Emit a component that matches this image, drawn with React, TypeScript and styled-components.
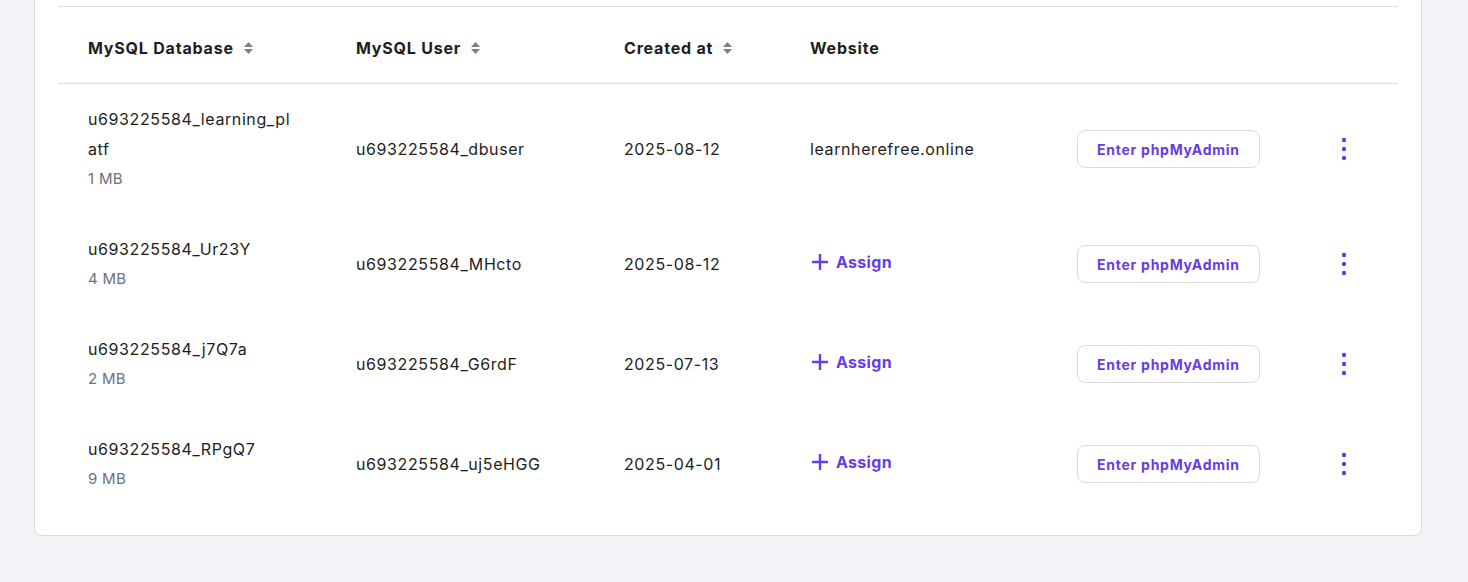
import React from "react";
import { createGlobalStyle, styled } from "styled-components";

type Db = {
  name: string;
  size: string;
  user: string;
  created: string;
  website?: string;
};

const rows: Db[] = [
  {
    name: "u693225584_learning_platf",
    size: "1 MB",
    user: "u693225584_dbuser",
    created: "2025-08-12",
    website: "learnherefree.online",
  },
  { name: "u693225584_Ur23Y", size: "4 MB", user: "u693225584_MHcto", created: "2025-08-12" },
  { name: "u693225584_j7Q7a", size: "2 MB", user: "u693225584_G6rdF", created: "2025-07-13" },
  { name: "u693225584_RPgQ7", size: "9 MB", user: "u693225584_uj5eHGG", created: "2025-04-01" },
];

const GlobalStyle = createGlobalStyle`
  body {
    margin: 0;
    background: #f2f3f6;
    font-family: "Inter", "DejaVu Sans", sans-serif;
    color: #1d1e20;
  }
`;

const Page = styled.div`
  padding: 0 46px 45px 34px;
`;

const Card = styled.section`
  background: #fff;
  border: 1px solid #dadce0;
  border-top: none;
  border-radius: 0 0 8px 8px;
  padding: 6px 23px 21px;
`;

const Row = styled.div<{ $head?: boolean }>`
  display: grid;
  grid-template-columns: 268px 268px 186px 267px 267px 1fr;
  align-items: center;
  min-height: ${({ $head }) => ($head ? "76px" : "60px")};
  padding: ${({ $head }) => ($head ? "0" : "20px 0")};
  border-top: ${({ $head }) => ($head ? "1px solid #dadce0" : "none")};
  border-bottom: ${({ $head }) => ($head ? "1px solid #dadce0" : "none")};
`;

const Cell = styled.div`
  padding: 0 30px;
  font-size: 16px;
  line-height: 30px;
  letter-spacing: 0.6px;
  min-width: 0;
`;

const HeadCell = styled(Cell)`
  display: flex;
  align-items: center;
  gap: 9px;
  padding-top: 6px;
  font-weight: 700;
  letter-spacing: 0.8px;
`;

const DbName = styled.div`
  word-break: break-all;
`;

const DbSize = styled.div`
  color: #6d7081;
  font-size: 15px;
  letter-spacing: 0.3px;
`;

const AssignLink = styled.a`
  display: inline-flex;
  align-items: center;
  gap: 6px;
  color: #673de6;
  font-weight: 700;
  letter-spacing: 0.3px;
  text-decoration: none;
  cursor: pointer;
`;

const OutlineButton = styled.button`
  display: block;
  height: 38px;
  padding: 0 19px;
  border: 1px solid #dadce0;
  border-radius: 8px;
  background: #fff;
  color: #673de6;
  font-family: inherit;
  font-size: 14px;
  font-weight: 700;
  letter-spacing: 0.75px;
  cursor: pointer;
`;

const MenuButton = styled.button`
  display: flex;
  border: none;
  background: none;
  padding: 0;
  margin-left: -3px;
  cursor: pointer;
`;

const SortIcon = () => (
  <svg width="11" height="14" viewBox="0 0 11 14">
    <path d="M5.5 1 L10 6 H1 Z M5.5 13 L10 8 H1 Z" fill="#7c7f8e" />
  </svg>
);

const PlusIcon = () => (
  <svg width="20" height="20" viewBox="0 0 20 20">
    <path d="M10 2 V18 M2 10 H18" stroke="#673de6" strokeWidth="2.4" />
  </svg>
);

const DotsIcon = () => (
  <svg width="6" height="24" viewBox="0 0 6 24">
    <circle cx="3" cy="3" r="2.2" fill="#673de6" />
    <circle cx="3" cy="12" r="2.2" fill="#673de6" />
    <circle cx="3" cy="21" r="2.2" fill="#673de6" />
  </svg>
);

const App = () => {
  return (
    <Page>
      <GlobalStyle />
      <Card>
        <Row $head>
          <HeadCell>
            MySQL Database <SortIcon />
          </HeadCell>
          <HeadCell>
            MySQL User <SortIcon />
          </HeadCell>
          <HeadCell>
            Created at <SortIcon />
          </HeadCell>
          <HeadCell>Website</HeadCell>
          <HeadCell />
          <HeadCell />
        </Row>
        {rows.map((r) => (
          <Row key={r.name}>
            <Cell>
              <DbName>{r.name}</DbName>
              <DbSize>{r.size}</DbSize>
            </Cell>
            <Cell>{r.user}</Cell>
            <Cell>{r.created}</Cell>
            <Cell>
              {r.website ? (
                r.website
              ) : (
                <AssignLink>
                  <PlusIcon />
                  Assign
                </AssignLink>
              )}
            </Cell>
            <Cell>
              <OutlineButton>Enter phpMyAdmin</OutlineButton>
            </Cell>
            <Cell>
              <MenuButton>
                <DotsIcon />
              </MenuButton>
            </Cell>
          </Row>
        ))}
      </Card>
    </Page>
  );
};

export default App;
